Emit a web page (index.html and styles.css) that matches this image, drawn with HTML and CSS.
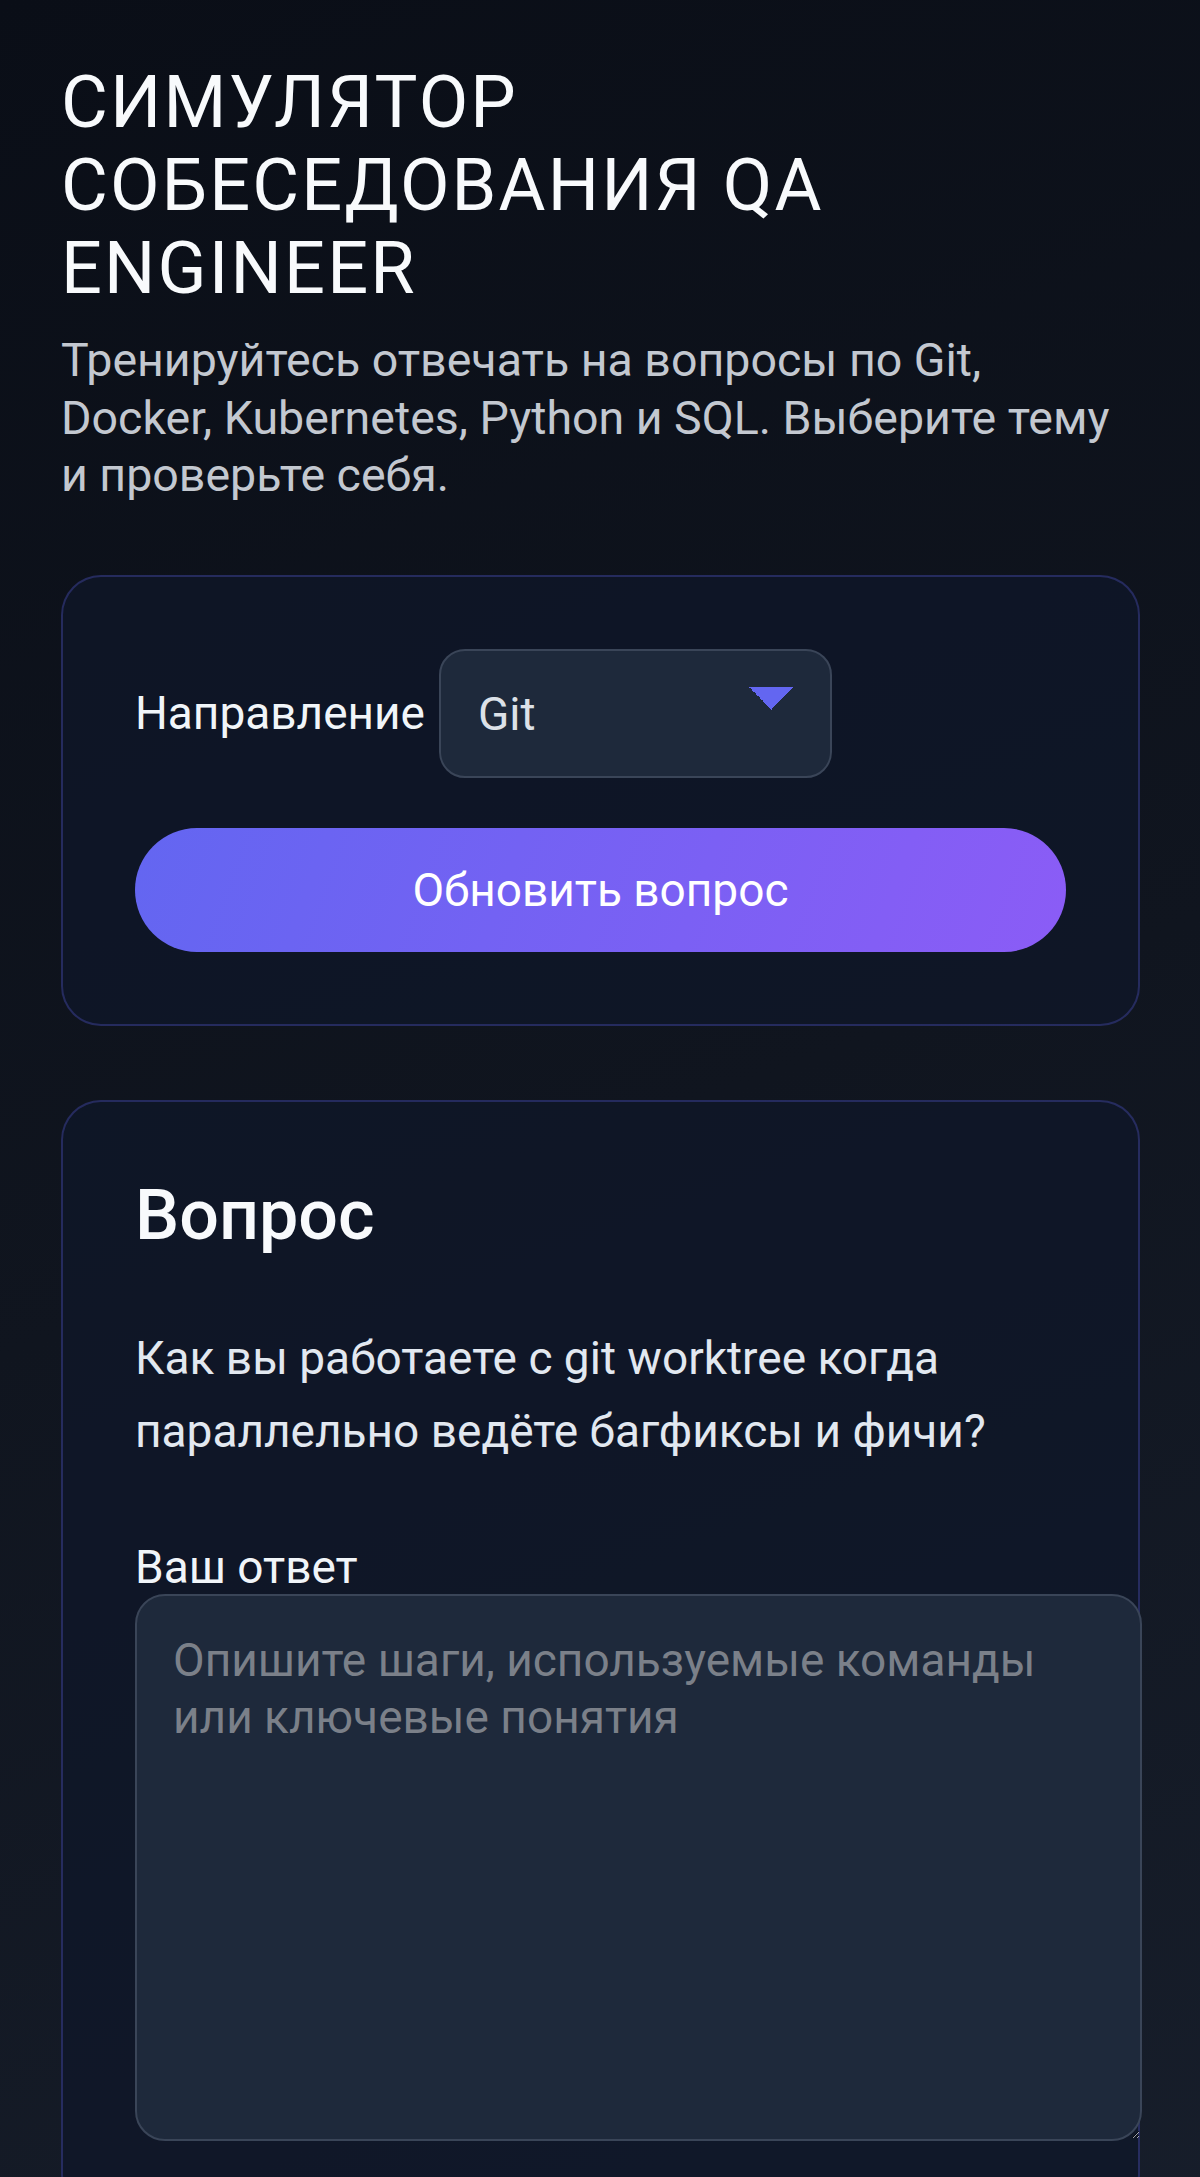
FILE: index.html
```html
<!DOCTYPE html>
<html lang="ru">
<head>
    <meta charset="UTF-8">
    <meta name="viewport" content="width=device-width, initial-scale=1.0">
    <title>Симулятор собеседования QA Engineer</title>
    <link rel="stylesheet" href="styles.css">
</head>
<body>

    <main class="page">
        <header class="hero">
            <h1>Симулятор собеседования QA Engineer</h1>
            <p class="subtitle">Тренируйтесь отвечать на вопросы по Git, Docker, Kubernetes, Python и SQL. Выберите тему и проверьте себя.</p>
        </header>

        <!-- Topic selection -->
        <section class="panel controls">
            <div class="field-row">
                <label for="topic">Направление</label>
                <select id="topic">
                    <option value="git">Git</option>
                    <option value="docker">Docker</option>
                    <option value="k8s">Kubernetes</option>
                    <option value="python">Python</option>
                    <option value="sql">SQL</option>
                </select>
            </div>

            <button id="nextButton" class="btn-primary">Обновить вопрос</button>
        </section>

        <!-- Current question and answer field -->
        <section class="panel question">
            <h2>Вопрос</h2>
            <p id="questionText" class="question-text">Как вы работаете с git worktree когда параллельно ведёте багфиксы и фичи?</p>

            <label for="answer" class="answer-label">Ваш ответ</label>
            <textarea id="answer" placeholder="Опишите шаги, используемые команды или ключевые понятия"></textarea>
        </section>
    </main>

</body>
</html>
```

FILE: styles.css
```css
/* General Body Styling */
html {
    background: #0c111b;
}

body {
    margin: 0;
    min-height: 100vh;
    font-family: Roboto, 'Noto Sans', sans-serif;
    color: #f1f5f9;
    background: linear-gradient(160deg, #0a0e17 0%, #10151f 50%, #171e2b 100%);
}

.page {
    padding: 61px 60px 60px 61px;
}

/* Header */
h1 {
    margin: 0 0 22px;
    font-size: 72px;
    font-weight: 400;
    line-height: 83px;
    letter-spacing: 0.03em;
    text-transform: uppercase;
    color: #f8fafc;
}

.subtitle {
    max-width: 1065px;
    margin: 0;
    font-size: 46.5px;
    line-height: 57.5px;
    color: #c3c8d0;
}

/* Panels */
.panel {
    background: rgba(15, 23, 42, 0.75);
    border: 2px solid rgba(99, 102, 241, 0.28);
    border-radius: 40px;
    padding: 72px;
}

.controls {
    margin-top: 70px;
}

.question {
    margin-top: 74px;
}

/* Form Elements */
.field-row {
    display: flex;
    align-items: center;
    gap: 14px;
}

label {
    font-size: 46px;
    color: #f1f5f9;
}

select {
    appearance: none;
    -webkit-appearance: none;
    width: 393px;
    padding: 36px 100px 35px 37px;
    font-family: inherit;
    font-size: 46px;
    color: #dce1e8;
    background-color: #1e293b;
    background-image:
        linear-gradient(45deg, transparent 50%, #6366f1 50%),
        linear-gradient(135deg, #6366f1 50%, transparent 50%);
    background-position: right 58px top 36px, right 36px top 36px;
    background-size: 23px 23px, 23px 23px;
    background-repeat: no-repeat;
    border: 2px solid #3a4558;
    border-radius: 26px;
    outline: none;
}

/* Button Styling */
.btn-primary {
    display: block;
    width: 100%;
    margin-top: 50px;
    padding: 35px 30px;
    font-family: inherit;
    font-size: 46px;
    line-height: 54px;
    color: #ffffff;
    background: linear-gradient(110deg, #6366f1, #8b5cf6);
    border: none;
    border-radius: 999px;
    cursor: pointer;
}

/* Question */
h2 {
    margin: 0 0 66px;
    font-size: 70px;
    font-weight: 500;
    color: #f8fafc;
}

.question-text {
    margin: 0 0 72px;
    font-size: 46px;
    line-height: 73px;
    color: #e2e8f0;
}

.answer-label {
    display: block;
}

textarea {
    display: block;
    width: 100%;
    height: 471px;
    padding: 36px;
    font-family: inherit;
    font-size: 46px;
    line-height: 57.5px;
    color: #e2e8f0;
    background: #1e293b;
    border: 2px solid #3a4558;
    border-radius: 30px;
    outline: none;
}

textarea::placeholder {
    color: #7b8089;
}
```
